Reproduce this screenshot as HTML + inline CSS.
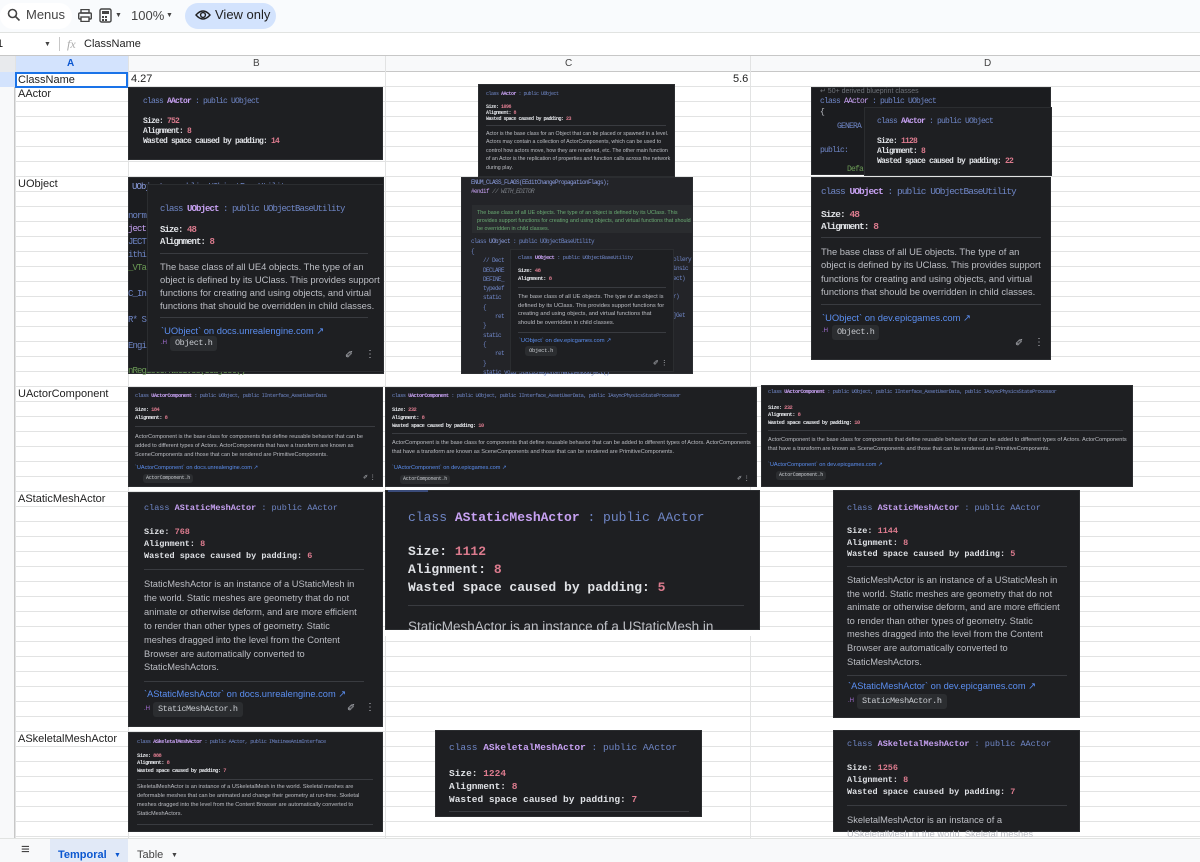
<!DOCTYPE html>
<html><head><meta charset="utf-8"><style>
*{margin:0;padding:0;box-sizing:border-box}
body{width:1200px;height:862px;overflow:hidden;position:relative;background:#fff;font-family:"Liberation Sans",sans-serif;color:#1f1f1f}
.a{position:absolute}
.t{position:absolute;white-space:nowrap;line-height:1}
.m{font-family:"Liberation Mono",monospace;letter-spacing:-0.1em}
.m0{letter-spacing:0}
.card{position:absolute;background:#1e1f22;border:1px solid #2b2d30;overflow:hidden}
.ed{background:#1b1c1f}
.k{color:#6f86c6}.n{color:#c7a1f2;font-weight:bold}.v{color:#dc7b8e}.b{color:#dfe1e5;font-weight:bold}
.d{color:#bcbec4;font-family:"Liberation Sans",sans-serif}
.l{color:#5b8ef0;font-family:"Liberation Sans",sans-serif}
.g{color:#6a9955}
.sep{position:absolute;height:1px;background:#393b40}
.file{position:absolute;background:#2b2d30;color:#c9ccd1;border-radius:3px;font-family:"Liberation Mono",monospace;white-space:nowrap;line-height:1;letter-spacing:-0.05em}
.grid{position:absolute;left:15px;top:72px;width:1185px;height:766px;background:repeating-linear-gradient(to bottom,transparent 0,transparent 14px,#e2e3e3 14px,#e2e3e3 15px)}
.vl{position:absolute;top:56px;width:1px;height:782px;background:#e2e3e3}
</style></head><body>
<!-- toolbar -->
<div class="a" style="left:0;top:0;width:1200px;height:32px;background:#f9fbfd"></div>
<div class="a" style="left:0;top:3px;width:72px;height:26px;background:#fff;border-radius:13px"></div>
<svg class="a" style="left:7px;top:8px" width="14" height="14"><circle cx="5.5" cy="5.5" r="4" fill="none" stroke="#444" stroke-width="1.6"/><line x1="8.5" y1="8.5" x2="12.5" y2="12.5" stroke="#444" stroke-width="1.6"/></svg>
<div class="t" style="left:26px;top:8px;font-size:13px;color:#444">Menus</div>
<svg class="a" style="left:78px;top:9px" width="14" height="13"><rect x="3" y="0.5" width="8" height="3.5" fill="none" stroke="#444" stroke-width="1.4"/><rect x="0.7" y="4" width="12.6" height="6" rx="1" fill="none" stroke="#444" stroke-width="1.4"/><rect x="3" y="8" width="8" height="4.5" fill="#fff" stroke="#444" stroke-width="1.4"/></svg>
<svg class="a" style="left:99px;top:8px" width="13" height="15"><rect x="1" y="1" width="11" height="13" rx="1.5" fill="none" stroke="#444" stroke-width="1.4"/><rect x="3" y="3" width="7" height="3" fill="#444"/><rect x="3" y="8" width="2" height="2" fill="#444"/><rect x="6" y="8" width="2" height="2" fill="#444"/><rect x="3" y="11" width="2" height="2" fill="#444"/><rect x="6" y="11" width="2" height="2" fill="#444"/></svg>
<div class="t" style="left:115px;top:12px;font-size:7px;color:#444">&#9660;</div>
<div class="t" style="left:131px;top:9px;font-size:13px;color:#444">100%</div>
<div class="t" style="left:166px;top:12px;font-size:7px;color:#444">&#9660;</div>
<div class="a" style="left:185px;top:3px;width:91px;height:26px;background:#d3e3fd;border-radius:13px"></div>
<svg class="a" style="left:195px;top:9px" width="16" height="12"><path d="M1 6 Q8 -2 15 6 Q8 14 1 6Z" fill="none" stroke="#1f1f1f" stroke-width="1.4"/><circle cx="8" cy="6" r="2.4" fill="none" stroke="#1f1f1f" stroke-width="1.4"/></svg>
<div class="t" style="left:215px;top:8px;font-size:13px;color:#1f1f1f">View only</div>
<!-- formula bar -->
<div class="a" style="left:0;top:32px;width:1200px;height:24px;background:#fff;border-top:1px solid #e1e3e1;border-bottom:1px solid #c7c7c7"></div>
<div class="t" style="left:-3px;top:39px;font-size:11px">1</div>
<div class="t" style="left:44px;top:41px;font-size:7px;color:#444">&#9660;</div>
<div class="a" style="left:59px;top:37px;width:1px;height:14px;background:#c7c7c7"></div>
<div class="t" style="left:67px;top:38px;font-size:12px;color:#aaa;font-style:italic;font-family:'Liberation Serif',serif">fx</div>
<div class="t" style="left:84px;top:39px;font-size:11px">ClassName</div>
<!-- col headers -->
<div class="a" style="left:0;top:56px;width:1200px;height:16px;background:#f8f9fa;border-bottom:1px solid #c7c7c7"></div>
<div class="a" style="left:0;top:56px;width:15px;height:16px;background:#e8eaed"></div>
<div class="a" style="left:15px;top:56px;width:113px;height:16px;background:#d3e3fd"></div>
<div class="t" style="left:67px;top:59px;font-size:10px;font-weight:bold;color:#0b57d0">A</div>
<div class="t" style="left:253px;top:59px;font-size:10px;color:#444">B</div>
<div class="t" style="left:565px;top:59px;font-size:10px;color:#444">C</div>
<div class="t" style="left:984px;top:59px;font-size:10px;color:#444">D</div>
<!-- grid -->
<div class="grid"></div>
<div class="a" style="left:0;top:72px;width:15px;height:766px;background:#f8f9fa;border-right:1px solid #c7c7c7"></div>
<div class="vl" style="left:15px"></div><div class="vl" style="left:128px"></div><div class="vl" style="left:385px"></div><div class="vl" style="left:750px"></div>
<div class="a" style="left:15px;top:72px;width:113px;height:16px;border:2px solid #1a73e8"></div>
<div class="a" style="left:0;top:72px;width:15px;height:15px;background:#d3e3fd"></div>
<div class="t" style="left:18px;top:75px;font-size:11px">ClassName</div>
<div class="t" style="left:131px;top:74px;font-size:11px">4.27</div>
<div class="t" style="left:733px;top:74px;font-size:11px">5.6</div>
<div class="t" style="left:18px;top:89px;font-size:11px">AActor</div>
<div class="t" style="left:18px;top:179px;font-size:11px">UObject</div>
<div class="t" style="left:18px;top:389px;font-size:11px">UActorComponent</div>
<div class="t" style="left:18px;top:494px;font-size:11px">AStaticMeshActor</div>
<div class="t" style="left:18px;top:734px;font-size:11px">ASkeletalMeshActor</div>

<!-- B AActor -->
<div class="card" style="left:128px;top:87px;width:255px;height:73px"></div>
<div class="t m" style="left:143px;top:98px;font-size:8px"><span class="k">class </span><span class="n">AActor</span><span class="k"> : public UObject</span></div>
<div class="t m b" style="left:143px;top:118px;font-size:8px">Size: <span class="v">752</span></div>
<div class="t m b" style="left:143px;top:128px;font-size:8px">Alignment: <span class="v">8</span></div>
<div class="t m b" style="left:143px;top:138px;font-size:8px">Wasted space caused by padding: <span class="v">14</span></div>

<!-- C AActor -->
<div class="card" style="left:478px;top:84px;width:197px;height:93px"></div>
<div class="t m" style="left:486px;top:92px;font-size:5px"><span class="k">class </span><span class="n">AActor</span><span class="k"> : public UObject</span></div>
<div class="t m b" style="left:486px;top:105px;font-size:5px">Size: <span class="v">1096</span></div>
<div class="t m b" style="left:486px;top:111px;font-size:5px">Alignment: <span class="v">8</span></div>
<div class="t m b" style="left:486px;top:117px;font-size:5px">Wasted space caused by padding: <span class="v">23</span></div>
<div class="sep" style="left:486px;top:125px;width:180px"></div>
<div class="t d" style="left:486px;top:130px;font-size:5.3px;line-height:8.4px;white-space:normal;width:185px">Actor is the base class for an Object that can be placed or spawned in a level. Actors may contain a collection of ActorComponents, which can be used to control how actors move, how they are rendered, etc. The other main function of an Actor is the replication of properties and function calls across the network during play.</div>

<!-- D AActor -->
<div class="card ed" style="left:811px;top:87px;width:240px;height:88px"></div>
<div class="t" style="left:820px;top:88px;font-size:7px;color:#6f737a">&#8629; 50+ derived blueprint classes</div>
<div class="t m" style="left:820px;top:98px;font-size:8px"><span class="k">class </span><span class="n" style="font-weight:normal">AActor</span><span class="k"> : public UObject</span></div>
<div class="t m" style="left:820px;top:109px;font-size:8px;color:#bcbec4">{</div>
<div class="t m k" style="left:837px;top:123px;font-size:8px">GENERA</div>
<div class="t m k" style="left:820px;top:147px;font-size:8px">public:</div>
<div class="t m g" style="left:847px;top:166px;font-size:8px">Defa</div>
<div class="card" style="left:864px;top:107px;width:188px;height:69px"></div>
<div class="t m" style="left:877px;top:118px;font-size:8px"><span class="k">class </span><span class="n">AActor</span><span class="k"> : public UObject</span></div>
<div class="t m b" style="left:877px;top:138px;font-size:8px">Size: <span class="v">1128</span></div>
<div class="t m b" style="left:877px;top:148px;font-size:8px">Alignment: <span class="v">8</span></div>
<div class="t m b" style="left:877px;top:158px;font-size:8px">Wasted space caused by padding: <span class="v">22</span></div>

<!-- B UObject -->
<div class="card ed" style="left:128px;top:177px;width:256px;height:197px"></div>
<div class="t m" style="left:132px;top:183px;font-size:9px"><span class="n" style="font-weight:normal;color:#8c9ee0">UObject</span><span class="k"> : public UObjectBaseUtility</span></div>
<div class="t m" style="left:128px;top:210px;font-size:9px;line-height:13px;white-space:pre;color:#6f86c6">norm
<span style="color:#c7a1f2">ject</span>
JECT
ithi
<span class="g">_VTa</span>

C_In

R* S

Engi</div>
<div class="t m g" style="left:128px;top:367px;font-size:9px">nRegisterNatives(UObject()</div>
<div class="card" style="left:147px;top:184px;width:237px;height:188px"></div>
<div class="t m" style="left:160px;top:205px;font-size:9px"><span class="k">class </span><span class="n">UObject</span><span class="k"> : public UObjectBaseUtility</span></div>
<div class="t m b" style="left:160px;top:226px;font-size:9px">Size: <span class="v">48</span></div>
<div class="t m b" style="left:160px;top:238px;font-size:9px">Alignment: <span class="v">8</span></div>
<div class="sep" style="left:160px;top:253px;width:208px"></div>
<div class="t d" style="left:160px;top:260px;font-size:9.4px;line-height:13px;white-space:normal;width:225px">The base class of all UE4 objects. The type of an object is defined by its UClass. This provides support functions for creating and using objects, and virtual functions that should be overridden in child classes.</div>
<div class="sep" style="left:160px;top:317px;width:208px"></div>
<div class="t l" style="left:161px;top:326px;font-size:9.4px">`UObject` on docs.unrealengine.com &#8599;</div>
<div class="t" style="left:161px;top:340px;font-size:6px;color:#a871d8">.H</div>
<div class="file" style="left:170px;top:336px;font-size:8.5px;padding:3px 5px">Object.h</div>
<div class="t" style="left:345px;top:351px;font-size:10px;color:#bcbec4">&#10000;</div>
<div class="t" style="left:365px;top:350px;font-size:10px;color:#bcbec4">&#8942;</div>

<!-- C UObject -->
<div class="card ed" style="left:461px;top:177px;width:232px;height:197px;background:#232428"></div>
<div class="t m" style="left:471px;top:180px;font-size:6px;color:#8c9ee0">ENUM_CLASS_FLAGS(EEditChangePropagationFlags);</div>
<div class="t m" style="left:471px;top:189px;font-size:6px"><span style="color:#c7a1f2">#endif</span> <span style="color:#7a7e85;font-style:italic">// WITH_EDITOR</span></div>
<div class="a" style="left:472px;top:205px;width:221px;height:28px;background:#2a2c2f"></div>
<div class="t g" style="left:477px;top:209px;font-size:5.4px;line-height:8px;white-space:normal;width:216px;color:#6aab73;height:24px;overflow:hidden">The base class of all UE objects. The type of an object is defined by its UClass. This provides support functions for creating and using objects, and virtual functions that should be overridden in child classes.</div>
<div class="t m" style="left:471px;top:239px;font-size:6px"><span class="k">class </span><span style="color:#8c9ee0">UObject</span><span class="k"> : public UObjectBaseUtility</span></div>
<div class="t m k" style="left:471px;top:247px;font-size:6px;line-height:9.3px;white-space:pre">{
    // Dect
    DECLARE
    DEFINE_
    typedef
    static
    {
        ret
    }
    static
    {
        ret
    }
    static void StaticRegisterNativesUObject()</div>
<div class="t m k" style="left:673px;top:255px;font-size:6px;line-height:9.3px;white-space:pre">ollery
insic
ect)

r)

]Get</div>
<div class="card" style="left:510px;top:249px;width:164px;height:123px"></div>
<div class="t m" style="left:518px;top:255px;font-size:5.6px"><span class="k">class </span><span class="n">UObject</span><span class="k"> : public UObjectBaseUtility</span></div>
<div class="t m b" style="left:518px;top:268px;font-size:5.6px">Size: <span class="v">48</span></div>
<div class="t m b" style="left:518px;top:276px;font-size:5.6px">Alignment: <span class="v">8</span></div>
<div class="sep" style="left:518px;top:287px;width:148px"></div>
<div class="t d" style="left:518px;top:293px;font-size:5.8px;line-height:8.6px;white-space:normal;width:152px">The base class of all UE objects. The type of an object is defined by its UClass. This provides support functions for creating and using objects, and virtual functions that should be overridden in child classes.</div>
<div class="sep" style="left:518px;top:332px;width:148px"></div>
<div class="t l" style="left:519px;top:339px;font-size:5.8px">`UObject` on dev.epicgames.com &#8599;</div>
<div class="file" style="left:525px;top:346px;font-size:5.5px;padding:2px 4px">Object.h</div>
<div class="t" style="left:653px;top:360px;font-size:7px;color:#bcbec4">&#10000; &#8942;</div>

<!-- D UObject -->
<div class="card" style="left:811px;top:177px;width:240px;height:183px"></div>
<div class="t m" style="left:821px;top:187px;font-size:9.5px"><span class="k">class </span><span class="n">UObject</span><span class="k"> : public UObjectBaseUtility</span></div>
<div class="t m b" style="left:821px;top:210px;font-size:9.5px">Size: <span class="v">48</span></div>
<div class="t m b" style="left:821px;top:222px;font-size:9.5px">Alignment: <span class="v">8</span></div>
<div class="sep" style="left:821px;top:237px;width:220px"></div>
<div class="t d" style="left:821px;top:245px;font-size:9.4px;line-height:13.3px;white-space:normal;width:222px">The base class of all UE objects. The type of an object is defined by its UClass. This provides support functions for creating and using objects, and virtual functions that should be overridden in child classes.</div>
<div class="sep" style="left:821px;top:304px;width:220px"></div>
<div class="t l" style="left:822px;top:313px;font-size:9.4px">`UObject` on dev.epicgames.com &#8599;</div>
<div class="t" style="left:822px;top:328px;font-size:6px;color:#a871d8">.H</div>
<div class="file" style="left:832px;top:325px;font-size:8.5px;padding:3px 5px">Object.h</div>
<div class="t" style="left:1015px;top:339px;font-size:10px;color:#bcbec4">&#10000;</div>
<div class="t" style="left:1034px;top:338px;font-size:10px;color:#bcbec4">&#8942;</div>

<!-- UActorComponent B -->
<div class="card" style="left:128px;top:387px;width:255px;height:100px"></div>
<div class="t m" style="left:135px;top:394px;font-size:5.4px"><span class="k">class </span><span class="n">UActorComponent</span><span class="k"> : public UObject, public IInterface_AssetUserData</span></div>
<div class="t m b" style="left:135px;top:408px;font-size:5.4px">Size: <span class="v">184</span></div>
<div class="t m b" style="left:135px;top:416px;font-size:5.4px">Alignment: <span class="v">8</span></div>
<div class="sep" style="left:135px;top:426px;width:240px"></div>
<div class="t d" style="left:135px;top:433px;font-size:5.6px;line-height:9px;white-space:normal;width:245px">ActorComponent is the base class for components that define reusable behavior that can be added to different types of Actors. ActorComponents that have a transform are known as SceneComponents and those that can be rendered are PrimitiveComponents.</div>
<div class="t l" style="left:135px;top:466px;font-size:5.6px">`UActorComponent` on docs.unrealengine.com &#8599;</div>
<div class="file" style="left:143px;top:474px;font-size:5px;padding:2px 3px">ActorComponent.h</div>
<div class="t" style="left:363px;top:475px;font-size:6px;color:#bcbec4">&#10000; &#8942;</div>

<!-- C -->
<div class="card" style="left:385px;top:387px;width:372px;height:100px"></div>
<div class="t m" style="left:392px;top:394px;font-size:5.4px"><span class="k">class </span><span class="n">UActorComponent</span><span class="k"> : public UObject, public IInterface_AssetUserData, public IAsyncPhysicsStateProcessor</span></div>
<div class="t m b" style="left:392px;top:408px;font-size:5.4px">Size: <span class="v">232</span></div>
<div class="t m b" style="left:392px;top:416px;font-size:5.4px">Alignment: <span class="v">8</span></div>
<div class="t m b" style="left:392px;top:424px;font-size:5.4px">Wasted space caused by padding: <span class="v">10</span></div>
<div class="sep" style="left:392px;top:433px;width:355px"></div>
<div class="t d" style="left:392px;top:439px;font-size:5.6px;line-height:9px;white-space:normal;width:360px">ActorComponent is the base class for components that define reusable behavior that can be added to different types of Actors. ActorComponents that have a transform are known as SceneComponents and those that can be rendered are PrimitiveComponents.</div>
<div class="t l" style="left:392px;top:466px;font-size:5.6px">`UActorComponent` on dev.epicgames.com &#8599;</div>
<div class="file" style="left:400px;top:475px;font-size:5px;padding:2px 3px">ActorComponent.h</div>
<div class="t" style="left:737px;top:476px;font-size:6px;color:#bcbec4">&#10000; &#8942;</div>

<!-- D -->
<div class="card" style="left:761px;top:385px;width:372px;height:102px"></div>
<div class="t m" style="left:768px;top:390px;font-size:5.4px"><span class="k">class </span><span class="n">UActorComponent</span><span class="k"> : public UObject, public IInterface_AssetUserData, public IAsyncPhysicsStateProcessor</span></div>
<div class="t m b" style="left:768px;top:406px;font-size:5.4px">Size: <span class="v">232</span></div>
<div class="t m b" style="left:768px;top:413px;font-size:5.4px">Alignment: <span class="v">8</span></div>
<div class="t m b" style="left:768px;top:421px;font-size:5.4px">Wasted space caused by padding: <span class="v">10</span></div>
<div class="sep" style="left:768px;top:430px;width:355px"></div>
<div class="t d" style="left:768px;top:436px;font-size:5.6px;line-height:9px;white-space:normal;width:360px">ActorComponent is the base class for components that define reusable behavior that can be added to different types of Actors. ActorComponents that have a transform are known as SceneComponents and those that can be rendered are PrimitiveComponents.</div>
<div class="t l" style="left:768px;top:463px;font-size:5.6px">`UActorComponent` on dev.epicgames.com &#8599;</div>
<div class="file" style="left:776px;top:471px;font-size:5px;padding:2px 3px">ActorComponent.h</div>

<!-- Static B -->
<div class="card" style="left:128px;top:492px;width:255px;height:235px"></div>
<div class="t m m0" style="left:144px;top:504px;font-size:8.5px"><span class="k">class </span><span class="n">AStaticMeshActor</span><span class="k"> : public AActor</span></div>
<div class="t m m0 b" style="left:144px;top:528px;font-size:8.5px">Size: <span class="v">768</span></div>
<div class="t m m0 b" style="left:144px;top:540px;font-size:8.5px">Alignment: <span class="v">8</span></div>
<div class="t m m0 b" style="left:144px;top:552px;font-size:8.5px">Wasted space caused by padding: <span class="v">6</span></div>
<div class="sep" style="left:144px;top:569px;width:220px"></div>
<div class="t d" style="left:144px;top:578px;font-size:9.3px;line-height:13.9px;white-space:normal;width:216px">StaticMeshActor is an instance of a UStaticMesh in the world. Static meshes are geometry that do not animate or otherwise deform, and are more efficient to render than other types of geometry. Static meshes dragged into the level from the Content Browser are automatically converted to StaticMeshActors.</div>
<div class="sep" style="left:144px;top:681px;width:220px"></div>
<div class="t l" style="left:144px;top:690px;font-size:9.3px">`AStaticMeshActor` on docs.unrealengine.com &#8599;</div>
<div class="t" style="left:144px;top:706px;font-size:6px;color:#a871d8">.H</div>
<div class="file" style="left:153px;top:702px;font-size:8.5px;padding:3px 5px">StaticMeshActor.h</div>
<div class="t" style="left:347px;top:704px;font-size:10px;color:#bcbec4">&#10000;</div>
<div class="t" style="left:365px;top:703px;font-size:10px;color:#bcbec4">&#8942;</div>

<!-- Static C -->
<div class="card" style="left:385px;top:490px;width:375px;height:140px"></div>
<div class="a" style="left:388px;top:490px;width:40px;height:2px;background:#3a4b7a"></div>
<div class="t m m0" style="left:408px;top:511px;font-size:13px"><span class="k">class </span><span class="n">AStaticMeshActor</span><span class="k"> : public AActor</span></div>
<div class="t m m0 b" style="left:408px;top:545px;font-size:13px">Size: <span class="v">1112</span></div>
<div class="t m m0 b" style="left:408px;top:563px;font-size:13px">Alignment: <span class="v">8</span></div>
<div class="t m m0 b" style="left:408px;top:581px;font-size:13px">Wasted space caused by padding: <span class="v">5</span></div>
<div class="sep" style="left:408px;top:605px;width:336px"></div>
<div class="t d" style="left:408px;top:620px;font-size:13.5px">StaticMeshActor is an instance of a UStaticMesh in</div>
<div class="a" style="left:384px;top:630px;width:378px;height:6px;background:#fff"></div>

<!-- Static D -->
<div class="card" style="left:833px;top:490px;width:247px;height:228px"></div>
<div class="t m m0" style="left:847px;top:504px;font-size:8.5px"><span class="k">class </span><span class="n">AStaticMeshActor</span><span class="k"> : public AActor</span></div>
<div class="t m m0 b" style="left:847px;top:527px;font-size:8.5px">Size: <span class="v">1144</span></div>
<div class="t m m0 b" style="left:847px;top:539px;font-size:8.5px">Alignment: <span class="v">8</span></div>
<div class="t m m0 b" style="left:847px;top:550px;font-size:8.5px">Wasted space caused by padding: <span class="v">5</span></div>
<div class="sep" style="left:847px;top:566px;width:220px"></div>
<div class="t d" style="left:847px;top:574px;font-size:9.3px;line-height:13.6px;white-space:normal;width:216px">StaticMeshActor is an instance of a UStaticMesh in the world. Static meshes are geometry that do not animate or otherwise deform, and are more efficient to render than other types of geometry. Static meshes dragged into the level from the Content Browser are automatically converted to StaticMeshActors.</div>
<div class="sep" style="left:847px;top:675px;width:220px"></div>
<div class="t l" style="left:848px;top:682px;font-size:9.3px">`AStaticMeshActor` on dev.epicgames.com &#8599;</div>
<div class="t" style="left:848px;top:698px;font-size:6px;color:#a871d8">.H</div>
<div class="file" style="left:857px;top:694px;font-size:8.5px;padding:3px 5px">StaticMeshActor.h</div>

<!-- Skeletal B -->
<div class="card" style="left:128px;top:732px;width:255px;height:100px"></div>
<div class="t m" style="left:137px;top:740px;font-size:5.4px"><span class="k">class </span><span class="n">ASkeletalMeshActor</span><span class="k"> : public AActor, public IMatineeAnimInterface</span></div>
<div class="t m b" style="left:137px;top:754px;font-size:5.4px">Size: <span class="v">888</span></div>
<div class="t m b" style="left:137px;top:761px;font-size:5.4px">Alignment: <span class="v">8</span></div>
<div class="t m b" style="left:137px;top:769px;font-size:5.4px">Wasted space caused by padding: <span class="v">7</span></div>
<div class="sep" style="left:137px;top:779px;width:236px"></div>
<div class="t d" style="left:137px;top:783px;font-size:5.6px;line-height:9px;white-space:normal;width:242px">SkeletalMeshActor is an instance of a USkeletalMesh in the world. Skeletal meshes are deformable meshes that can be animated and change their geometry at run-time. Skeletal meshes dragged into the level from the Content Browser are automatically converted to StaticMeshActors.</div>
<div class="sep" style="left:137px;top:824px;width:236px"></div>

<!-- Skeletal C -->
<div class="card" style="left:435px;top:730px;width:267px;height:87px"></div>
<div class="t m m0" style="left:449px;top:743px;font-size:9.5px"><span class="k">class </span><span class="n">ASkeletalMeshActor</span><span class="k"> : public AActor</span></div>
<div class="t m m0 b" style="left:449px;top:769px;font-size:9.5px">Size: <span class="v">1224</span></div>
<div class="t m m0 b" style="left:449px;top:782px;font-size:9.5px">Alignment: <span class="v">8</span></div>
<div class="t m m0 b" style="left:449px;top:795px;font-size:9.5px">Wasted space caused by padding: <span class="v">7</span></div>
<div class="sep" style="left:449px;top:811px;width:240px"></div>

<!-- Skeletal D -->
<div class="card" style="left:833px;top:730px;width:247px;height:102px"></div>
<div class="t m m0" style="left:847px;top:740px;font-size:8.5px"><span class="k">class </span><span class="n">ASkeletalMeshActor</span><span class="k"> : public AActor</span></div>
<div class="t m m0 b" style="left:847px;top:764px;font-size:8.5px">Size: <span class="v">1256</span></div>
<div class="t m m0 b" style="left:847px;top:776px;font-size:8.5px">Alignment: <span class="v">8</span></div>
<div class="t m m0 b" style="left:847px;top:788px;font-size:8.5px">Wasted space caused by padding: <span class="v">7</span></div>
<div class="sep" style="left:847px;top:805px;width:220px"></div>
<div class="t d" style="left:847px;top:814px;font-size:9.3px;line-height:13.6px;white-space:normal;width:200px">SkeletalMeshActor is an instance of a USkeletalMesh in the world. Skeletal meshes are</div>

<!-- bottom tabs -->
<div class="a" style="left:0;top:838px;width:1200px;height:24px;background:#f8f9fa;border-top:1px solid #e1e3e1"></div>
<div class="t" style="left:21px;top:842px;font-size:15px;color:#444">&#8801;</div>
<div class="a" style="left:50px;top:839px;width:78px;height:23px;background:#e1e9f7"></div>
<div class="t" style="left:58px;top:850px;font-size:11px;font-weight:bold;color:#0b57d0">Temporal</div>
<div class="t" style="left:114px;top:852px;font-size:7px;color:#0b57d0">&#9660;</div>
<div class="t" style="left:137px;top:850px;font-size:11px;color:#444">Table</div>
<div class="t" style="left:171px;top:852px;font-size:7px;color:#444">&#9660;</div>
</body></html>
